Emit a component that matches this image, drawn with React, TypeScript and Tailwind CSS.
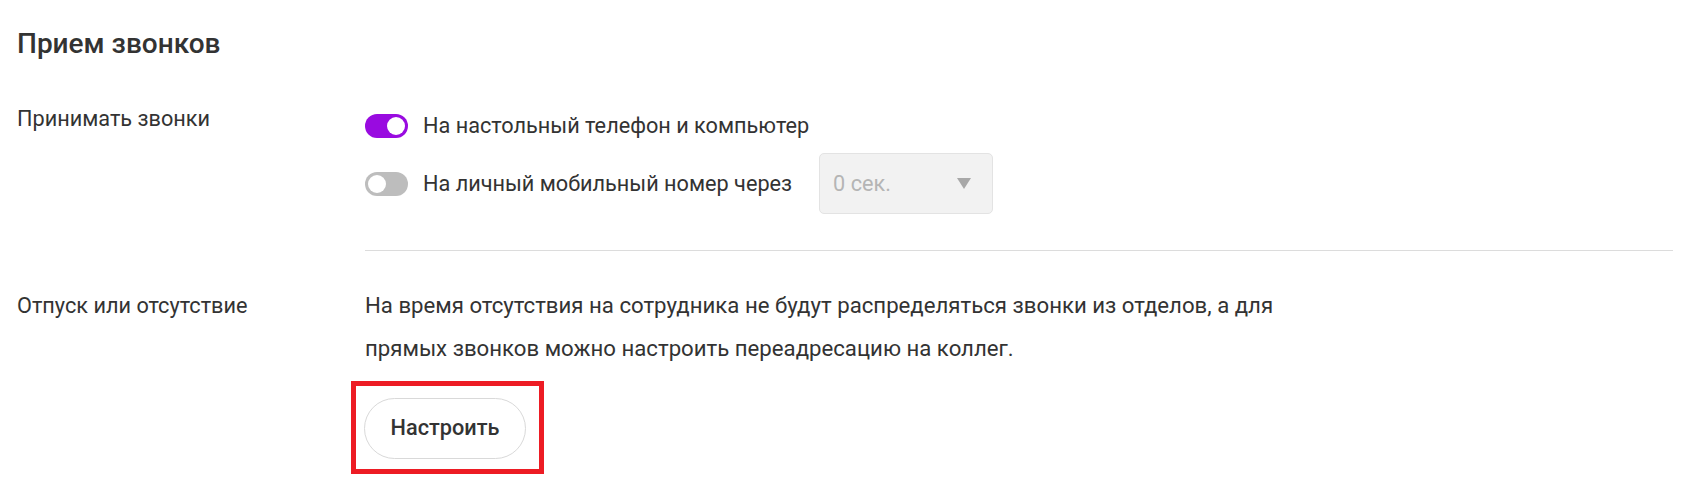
import React from 'react'

function Toggle({ on }: { on: boolean }) {
  return (
    <span
      className={`flex h-[24px] w-[43px] shrink-0 items-center rounded-full px-[3px] ${
        on ? 'justify-end bg-[#990be0]' : 'justify-start bg-[#bdbdbd]'
      }`}
    >
      <span className="h-[18px] w-[18px] rounded-full bg-white" />
    </span>
  )
}

export default function App() {
  return (
    <div className="h-[493px] w-[1703px] bg-white pl-[17px] pr-[30px] pt-[27px] font-['Roboto',sans-serif] text-[21.7px] text-[#333]">
      <h1 className="text-[28px] font-medium leading-[34px] text-[#333]">Прием звонков</h1>

      <div className="mt-[43px] grid grid-cols-[348px_1fr]">
        <div className="leading-[30px]">Принимать звонки</div>
        <div className="flex flex-col gap-[6px]">
          <label className="flex h-[43px] items-center gap-[15px] leading-[30px]">
            <Toggle on />
            <span className="pt-[1px]">На настольный телефон и компьютер</span>
          </label>
          <div className="flex h-[61px] items-center">
            <label className="flex items-center gap-[15px] leading-[30px]">
              <Toggle on={false} />
              <span>На личный мобильный номер через</span>
            </label>
            <div className="ml-[27px] flex h-[61px] w-[174px] items-center justify-between rounded-[5px] border border-[#e3e3e3] bg-[#f2f2f2] pl-[13px] pr-[21px] text-[#b5b5b5]">
              <span className="leading-[30px]">0 сек.</span>
              <svg width="14" height="11" viewBox="0 0 14 11">
                <path d="M0 0h14L7 11z" fill="#a8a8a8" />
              </svg>
            </div>
          </div>
          <div className="mt-[30px] h-px bg-[#dcdcdc]" />
        </div>
      </div>

      <div className="mt-[33px] grid grid-cols-[348px_1fr]">
        <div className="leading-[43px]">Отпуск или отсутствие</div>
        <div>
          <p className="w-[920px] text-[22.2px] leading-[43px]">
            На время отсутствия на сотрудника не будут распределяться звонки из отделов, а для прямых звонков можно настроить переадресацию на коллег.
          </p>
          <div className="-ml-[14px] mt-[11px] inline-flex border-[5px] border-[#ed1c24] pb-[10px] pl-[8px] pr-[13px] pt-[12px]">
            <button className="h-[61px] w-[162px] rounded-full border border-[#d9d9d9] bg-white font-medium text-[#333]">
              Настроить
            </button>
          </div>
        </div>
      </div>
    </div>
  )
}
